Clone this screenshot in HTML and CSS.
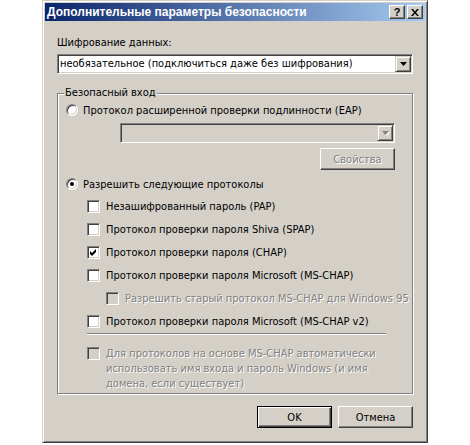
FILE: index.html
```html
<!DOCTYPE html>
<html lang="ru">
<head>
<meta charset="utf-8">
<title>Дополнительные параметры безопасности</title>
<link rel="stylesheet" href="styles.css">
</head>
<body>
<div class="window">
  <div class="titlebar">
    <span class="title">Дополнительные параметры безопасности</span>
    <div class="tbtns">
      <span class="tbtn tbtn-help">?</span>
      <span class="tbtn"><svg width="8" height="7" viewBox="0 0 8 7"><path d="M0 0h2l2 2.5L6 0h2L5 3.5 8 7H6L4 4.5 2 7H0l3-3.5z" fill="#000"/></svg></span>
    </div>
  </div>
  <div class="client">
    <div class="label">Шифрование данных:</div>
    <div class="combo">
      <span class="combo-text">необязательное (подключиться даже без шифрования)</span>
      <span class="drop"><svg width="7" height="4" viewBox="0 0 7 4"><path d="M0 0h7L3.5 4z" fill="#000"/></svg></span>
    </div>

    <fieldset class="group">
      <legend>Безопасный вход</legend>
      <div class="row row-eap"><span class="radio"></span><span>Протокол расширенной проверки подлинности (EAP)</span></div>
      <div class="combo combo-disabled">
        <span class="combo-text"></span>
        <span class="drop"><svg width="7" height="4" viewBox="0 0 7 4"><path d="M0 0h7L3.5 4z" fill="#808080"/></svg></span>
      </div>
      <div class="btn-row"><button class="btn btn-disabled">Свойства</button></div>
      <div class="row row-allow"><span class="radio checked"></span><span>Разрешить следующие протоколы</span></div>
      <div class="checks">
        <div class="check-row"><span class="cb"></span><span>Незашифрованный пароль (PAP)</span></div>
        <div class="check-row"><span class="cb"></span><span>Протокол проверки пароля Shiva (SPAP)</span></div>
        <div class="check-row"><span class="cb"><svg width="7" height="7" viewBox="0 0 7 7"><path d="M0 2L2 4L6 0V3L2 7L0 5Z" fill="#000"/></svg></span><span>Протокол проверки пароля (CHAP)</span></div>
        <div class="check-row"><span class="cb"></span><span>Протокол проверки пароля Microsoft (MS-CHAP)</span></div>
        <div class="check-row sub disabled"><span class="cb"></span><span>Разрешить старый протокол MS-CHAP для Windows 95</span></div>
        <div class="check-row"><span class="cb"></span><span>Протокол проверки пароля Microsoft (MS-CHAP v2)</span></div>
      </div>
      <div class="sep"></div>
      <div class="check-multi disabled"><span class="cb"></span><span class="multi-text">Для протоколов на основе MS-CHAP автоматически использовать имя входа и пароль Windows (и имя домена, если существует)</span></div>
    </fieldset>

    <div class="actions">
      <button class="btn btn-default">OK</button>
      <button class="btn">Отмена</button>
    </div>
  </div>
</div>
</body>
</html>
```

FILE: styles.css
```css
html, body {
  margin: 0;
  padding: 0;
  background: #ffffff;
}
body {
  font-family: "DejaVu Sans Condensed", "Liberation Sans", Arial, sans-serif;
  font-size: 11px;
  color: #000;
}
.window {
  box-sizing: border-box;
  margin-left: 42px;
  width: 386px;
  height: 443px;
  background: #d4d0c8;
  border: 1px solid;
  border-color: #d4d0c8 #404040 #404040 #d4d0c8;
  box-shadow: inset 1px 1px 0 #ffffff, inset -1px -1px 0 #808080;
  padding: 2px;
  overflow: hidden;
}
.titlebar {
  height: 18px;
  background: linear-gradient(to right, #0a246a, #a6caf0);
  display: flex;
  align-items: center;
  justify-content: space-between;
  padding: 0 2px 0 2px;
}
.title {
  color: #fff;
  font-family: "Liberation Sans", Arial, sans-serif;
  font-weight: bold;
  font-size: 12px;
  line-height: 14px;
  white-space: nowrap;
}
.tbtns {
  display: flex;
  gap: 2px;
}
.tbtn {
  box-sizing: border-box;
  width: 16px;
  height: 14px;
  background: #d4d0c8;
  border: 1px solid;
  border-color: #fff #404040 #404040 #fff;
  box-shadow: inset -1px -1px 0 #808080;
  display: flex;
  align-items: center;
  justify-content: center;
  font-family: "Liberation Sans", Arial, sans-serif;
  font-weight: bold;
  font-size: 11px;
  line-height: 12px;
}
.tbtn-help {
  padding-bottom: 1px;
}
.client {
  padding: 0 12px;
}
.label {
  margin-top: 15px;
  line-height: 14px;
  height: 14px;
}
.combo {
  box-sizing: border-box;
  margin-top: 4px;
  height: 20px;
  display: flex;
  background: #fff;
  border: 1px solid;
  border-color: #808080 #fff #fff #808080;
  box-shadow: inset 1px 1px 0 #404040, inset -1px -1px 0 #d4d0c8;
  padding: 1px;
}
.combo-text {
  flex: 1;
  line-height: 16px;
  padding-left: 1px;
  white-space: nowrap;
  overflow: hidden;
}
.drop {
  box-sizing: border-box;
  width: 16px;
  height: 16px;
  background: #d4d0c8;
  border: 1px solid;
  border-color: #d4d0c8 #404040 #404040 #d4d0c8;
  box-shadow: inset 1px 1px 0 #fff, inset -1px -1px 0 #808080;
  display: flex;
  align-items: center;
  justify-content: center;
}
.combo-disabled {
  background: #d4d0c8;
  margin: 5px 17px 0 62px;
}
.combo-disabled .drop svg {
  filter: drop-shadow(1px 1px 0 #fff);
}
.group {
  margin: 12px 0 0 0;
  padding: 0 0 2px 0;
  min-width: 0;
  border: 1px solid #808080;
  box-shadow: 1px 1px 0 #fff, inset 1px 1px 0 #fff;
}
.group legend {
  margin-left: 6px;
  padding: 0 1px;
  line-height: 14px;
  background: #d4d0c8;
}
.row {
  display: flex;
  align-items: center;
  height: 16px;
  padding-left: 8px;
  gap: 5px;
  white-space: nowrap;
}
.row-eap {
  margin-top: 2px;
}
.row-allow {
  margin-top: 6px;
}
.radio {
  box-sizing: border-box;
  width: 12px;
  height: 12px;
  border-radius: 50%;
  background: #fff;
  border: 1px solid;
  border-color: #808080 #fff #fff #808080;
  box-shadow: inset 1px 1px 0 #404040, inset -1px -1px 0 #d4d0c8;
  display: flex;
  align-items: center;
  justify-content: center;
  flex: none;
}
.radio.checked::after {
  content: "";
  width: 4px;
  height: 4px;
  border-radius: 50%;
  background: #000;
}
.btn-row {
  display: flex;
  justify-content: flex-end;
  margin: 5px 17px 0 0;
}
.btn {
  box-sizing: border-box;
  width: 75px;
  height: 22px;
  padding: 0;
  font-family: "DejaVu Sans Condensed", "Liberation Sans", Arial, sans-serif;
  font-size: 11px;
  color: #000;
  background: #d4d0c8;
  border: 1px solid;
  border-color: #fff #404040 #404040 #fff;
  box-shadow: inset -1px -1px 0 #808080, inset 1px 1px 0 #d4d0c8;
}
.btn-disabled {
  color: #808080;
  text-shadow: 1px 1px 0 #fff;
}
.btn-default {
  border-color: #000;
  box-shadow: inset 1px 1px 0 #fff, inset -1px -1px 0 #404040, inset -2px -2px 0 #808080;
}
.checks {
  margin-top: 3px;
}
.check-row {
  display: flex;
  align-items: center;
  height: 23px;
  padding-left: 29px;
  gap: 6px;
  white-space: nowrap;
}
.check-row.sub {
  padding-left: 48px;
}
.cb {
  box-sizing: border-box;
  width: 13px;
  height: 13px;
  flex: none;
  background: #fff;
  border: 1px solid;
  border-color: #808080 #fff #fff #808080;
  box-shadow: inset 1px 1px 0 #404040, inset -1px -1px 0 #d4d0c8;
  display: flex;
  align-items: center;
  justify-content: center;
}
.disabled .cb {
  background: #d4d0c8;
}
.disabled {
  color: #808080;
  text-shadow: 1px 1px 0 #fff;
}
.sep {
  height: 1px;
  border-top: 1px solid #808080;
  background: #fff;
  margin: 0 26px 0 29px;
}
.check-multi {
  display: flex;
  align-items: flex-start;
  gap: 6px;
  padding-left: 29px;
  margin-top: 11px;
}
.check-multi .cb {
  margin-top: 1px;
}
.multi-text {
  width: 270px;
  line-height: 15px;
}
.actions {
  display: flex;
  justify-content: flex-end;
  gap: 6px;
  margin-top: 12px;
}
```
